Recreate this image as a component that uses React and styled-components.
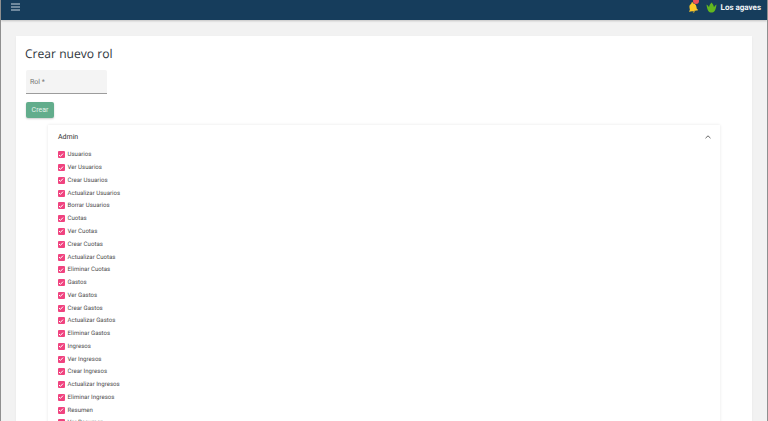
import React from 'react';
import styled, { createGlobalStyle } from 'styled-components';

const Global = createGlobalStyle`
  html, body { margin: 0; padding: 0; height: 100%; overflow: hidden; }
  body { font-family: Roboto, "Liberation Sans", sans-serif; background: #f2f2f2; text-rendering: geometricPrecision; }
`;
const Frame = styled.div`
  width: 768px; height: 421px; box-sizing: border-box; overflow: hidden; opacity: .999;
  border-left: 1px solid #8f8f8f; border-right: 1px solid #8f8f8f;
  display: flex; flex-direction: column; background: #f2f2f2;
`;
const TopBar = styled.header`
  height: 20px; flex: none; background: #163d5c; display: flex; align-items: center;
  justify-content: space-between; padding: 0 6px 6px 10px; box-sizing: border-box;
  box-shadow: 0 1px 2px rgba(0,0,0,.2);
`;
const Right = styled.div`display: flex; align-items: center; gap: 3px;`;
const Bell = styled.div`position: relative; width: 12px; height: 13px; display: flex; margin-right: 3px;`;
const Badge = styled.span`
  position: absolute; top: -3px; right: 0; width: 6px; height: 6px; border-radius: 50%; background: #f0525a;
`;
const BellIcon = styled.svg`transform: rotate(-10deg);`;
const Brand = styled.span`color: #f2f5f7; font-size: 8px; font-weight: 700;`;
const Main = styled.main`padding: 16px 15px 0 15px; flex: 1; min-height: 0;`;
const Card = styled.section`
  background: #fff; padding: 8px 10px 0 9px; height: 400px; box-sizing: border-box;
  box-shadow: 0 1px 2px rgba(0,0,0,.06);
`;
const Title = styled.h1`
  margin: 0; font-family: "Open Sans", sans-serif; font-weight: 400; font-size: 12.100px; line-height: 20px; color: #2f363d;
`;
const Field = styled.div`
  margin-top: 6px; margin-left: 1px; width: 81px; height: 24px; background: #f4f4f4; border-bottom: 1px solid #9c9c9c;
  box-sizing: border-box; display: flex; align-items: center; padding-left: 4px;
  font-size: 7px; color: #757575; border-radius: 2px 2px 0 0;
`;
const Submit = styled.button`
  display: block; margin: 8px 0 0 1px; width: 28px; height: 16px; padding: 0; border: 0; border-radius: 2px;
  background: #62ad8c; color: #e6f3ed; font: 400 7px Roboto, sans-serif;
  box-shadow: 0 1px 2px rgba(0,0,0,.2);
`;
const Panel = styled.div`
  margin: 7px 0 0 23px; width: 672px; background: #fff; box-shadow: 0 0 3px rgba(0,0,0,.1);
`;
const PanelHead = styled.div`
  height: 23.500px; display: flex; align-items: center; justify-content: space-between;
  padding: 0 8px 0 10px; font-size: 7px; color: #333;
`;
const List = styled.ul`list-style: none; margin: 0; padding: 0 9px 0 10px;`;
const Row = styled.li`display: flex; align-items: center; height: 12.77px; gap: 3px;`;
const Box = styled.span`
  width: 6.500px; height: 7px; border-radius: 1px; background: #f0437f; display: flex; align-items: center; justify-content: center;
`;
const Label = styled.span`font-size: 6.100px; color: #4d4d4d;`;

const items = ['Usuarios','Ver Usuarios','Crear Usuarios','Actualizar Usuarios','Borrar Usuarios','Cuotas','Ver Cuotas','Crear Cuotas','Actualizar Cuotas','Eliminar Cuotas','Gastos','Ver Gastos','Crear Gastos','Actualizar Gastos','Eliminar Gastos','Ingresos','Ver Ingresos','Crear Ingresos','Actualizar Ingresos','Eliminar Ingresos','Resumen','Ver Resumen'];

export default function App() {
  return (
    <Frame>
      <Global />
      <TopBar>
        <svg width="9" height="8" viewBox="0 0 9 8" stroke="#c9d6df" strokeWidth="1"><path d="M0 1h9M0 4h9M0 7h9" /></svg>
        <Right>
          <Bell>
            <BellIcon width="13" height="13" viewBox="0 0 24 24" fill="#ffc928"><path d="M12 22a2.500 2.500 0 0 0 2.400-2h-4.800A2.500 2.500 0 0 0 12 22zm7-6v-5c0-3.300-1.800-6-5-6.800V3.500a2 2 0 0 0-4 0V4.200C6.800 5 5 7.700 5 11v5l-2 2v1h18v-1z" /></BellIcon>
            <Badge />
          </Bell>
          <svg width="13" height="12" viewBox="0 0 13 12" fill="#62b81f"><path d="M6.500 11.500C4 11.500 2.300 10.300 1.500 3.500 2.800 4.300 3.600 5.200 4 6.200 4.300 4.500 5 3 6.500 1.500 8 3 8.700 4.500 9 6.200 9.400 5.200 10.200 4.300 11.500 3.500 10.700 10.300 9 11.500 6.500 11.500z" /></svg>
          <Brand>Los agaves</Brand>
        </Right>
      </TopBar>
      <Main>
        <Card>
          <Title>Crear nuevo rol</Title>
          <Field>Rol *</Field>
          <Submit>Crear</Submit>
          <Panel>
            <PanelHead>
              Admin
              <svg width="8" height="8" viewBox="0 0 8 8" fill="none" stroke="#666" strokeWidth="1"><path d="M1.500 5.200 4 2.800l2.500 2.400" /></svg>
            </PanelHead>
            <List>
              {items.map((t) => (
                <Row key={t}>
                  <Box>
                    <svg width="6" height="6" viewBox="0 0 6 6" fill="none" stroke="#fff" strokeWidth="1"><path d="M1 3l1.400 1.400L5 1.600" /></svg>
                  </Box>
                  <Label>{t}</Label>
                </Row>
              ))}
            </List>
          </Panel>
        </Card>
      </Main>
    </Frame>
  );
}
